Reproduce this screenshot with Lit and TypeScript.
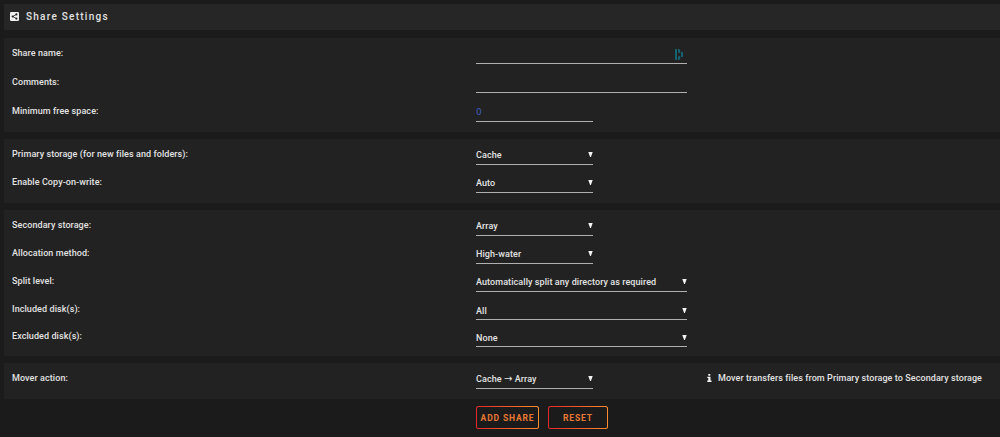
import { LitElement, html, css, svg } from "lit";
import { customElement } from "lit/decorators.js";
import { classMap } from "lit/directives/class-map.js";

interface Row {
  label: string;
  value?: string;
  kind: "text" | "number" | "select";
  wide?: boolean;
  vault?: boolean;
  tight?: boolean;
  note?: string;
}

const SECTIONS: { name: string; rows: Row[] }[] = [
  {
    name: "general",
    rows: [
      { label: "Share name:", kind: "text", wide: true, vault: true },
      { label: "Comments:", kind: "text", wide: true },
      { label: "Minimum free space:", kind: "number", value: "0" },
    ],
  },
  {
    name: "primary",
    rows: [
      { label: "Primary storage (for new files and folders):", kind: "select", value: "Cache" },
      { label: "Enable Copy-on-write:", kind: "select", value: "Auto" },
    ],
  },
  {
    name: "secondary",
    rows: [
      { label: "Secondary storage:", kind: "select", value: "Array" },
      { label: "Allocation method:", kind: "select", value: "High-water" },
      { label: "Split level:", kind: "select", value: "Automatically split any directory as required", wide: true },
      { label: "Included disk(s):", kind: "select", value: "All", wide: true, tight: true },
      { label: "Excluded disk(s):", kind: "select", value: "None", wide: true, tight: true },
    ],
  },
  {
    name: "mover",
    rows: [
      {
        label: "Mover action:",
        kind: "select",
        value: "Cache → Array",
        note: "Mover transfers files from Primary storage to Secondary storage",
      },
    ],
  },
];

@customElement("app-root")
export class AppRoot extends LitElement {
  static styles = css`
    :host {
      display: block;
      box-sizing: border-box;
      width: 1000px;
      height: 437px;
      overflow: hidden;
      padding: 4px 0 0 3.5px;
      background: #1b1b1b;
      color: #e2e2e2;
      font: 500 9px/12px Roboto, "Liberation Sans", sans-serif;
      letter-spacing: 0.08px;
    }
    .title {
      display: flex;
      align-items: center;
      box-sizing: border-box;
      height: 26px;
      padding: 0 0 1px 6.5px;
      background: #262626;
      font-size: 10px;
      letter-spacing: 1.25px;
      margin-bottom: 8px;
    }
    .title svg {
      width: 9px;
      height: 9px;
      margin-right: 7px;
    }
    .panel {
      box-sizing: border-box;
      background: #222222;
      padding: 6px 0 0 8.5px;
    }
    .general { height: 94px; margin-bottom: 7px; --step: 29px; }
    .primary { height: 64px; margin-bottom: 7px; --step: 28px; }
    .secondary { height: 146px; margin-bottom: 7px; --step: 28px; }
    .mover { height: 36px; margin-bottom: 7px; --step: 28px; }
    .row {
      display: grid;
      grid-template-columns: 464px 211px 1fr;
      height: var(--step);
      align-items: start;
    }
    .tight { height: 27px; }
    .label { padding-top: 3px; }
    .control {
      box-sizing: border-box;
      display: flex;
      justify-content: space-between;
      width: 117px;
      height: 20px;
      padding-top: 4px;
      border-bottom: 1px solid #b0b0b0;
    }
    .wide { width: 211px; }
    .tight .control { padding-top: 5px; }
    .number { color: #3f5eb8; font: 400 10px/12px "DejaVu Sans", sans-serif; font-size: 9px; }
    .arrow { width: 5px; height: 5px; margin: 3px 0.5px 0 0; }
    .vault { width: 9px; height: 11px; margin: 1px 3px 0 auto; }
    .glyph { font-family: "DejaVu Sans", sans-serif; font-size: 10px; line-height: 10px; }
    .note { display: flex; padding: 3px 0 0 20px; white-space: nowrap; }
    .note svg { width: 5px; height: 8px; margin: 2px 6px 0 0; }
    .actions {
      display: flex;
      gap: 9px;
      padding-left: 472.5px;
    }
    button {
      box-sizing: border-box;
      width: 63px;
      height: 23px;
      padding: 0;
      border: 1.5px solid transparent;
      border-radius: 2.5px;
      background:
        linear-gradient(#1b1b1b, #1b1b1b) padding-box,
        linear-gradient(90deg, #e22828, #ff8c2f) border-box;
      color: #e97835;
      font: 700 8.5px/12px Roboto, sans-serif;
      letter-spacing: 0.85px;
      white-space: nowrap;
    }
    .reset { width: 60px; }
  `;

  private control(row: Row) {
    const parts = (row.value ?? "").split("→");
    return html`<div class=${classMap({ control: true, wide: !!row.wide, number: row.kind === "number" })}>
      <span>${parts[0]}${parts.length > 1 ? html`<span class="glyph">→</span>${parts[1]}` : ""}</span>
      ${row.kind === "select"
        ? html`<svg class="arrow" viewBox="0 0 5 5">${svg`<path d="M.3 0h4.4L2.9 5h-.8z" fill="#f4f4f4"/>`}</svg>`
        : ""}
      ${row.vault
        ? html`<svg class="vault" viewBox="0 0 9 11">
            <path d="M0 0h2v11H0zM3 0h1l1.2 1v3H4L3 3zM3 8l1-1h1.2v3L4 11H3zM6 3h2v5H6z" fill="#136373" />
          </svg>`
        : ""}
    </div>`;
  }

  render() {
    return html`
      <div class="title">
        <svg viewBox="0 0 9 9">
          <rect width="9" height="9" rx="1.3" fill="#f2f2f2" />
          <path d="M6.4 2.4L2.8 4.5l3.6 2.1" fill="none" stroke="#262626" stroke-width=".8" />
          <circle cx="6.4" cy="2.4" r="1.1" fill="#262626" />
          <circle cx="2.7" cy="4.5" r="1.1" fill="#262626" />
          <circle cx="6.4" cy="6.6" r="1.1" fill="#262626" />
        </svg>
        <span>Share Settings</span>
      </div>
      ${SECTIONS.map(
        (s) => html`<section class="panel ${s.name}">
          ${s.rows.map(
            (r) => html`<div class=${classMap({ row: true, tight: !!r.tight })}>
              <span class="label">${r.label}</span>
              ${this.control(r)}
              ${r.note
                ? html`<div class="note">
                    <svg viewBox="0 0 5 8">
                      <path d="M1.3 0h2v1.8h-2zM.3 2.7h3.2v3.8h1V8H.3V6.5h1V4.1h-1z" fill="#f4f4f4" />
                    </svg>
                    <span>${r.note}</span>
                  </div>`
                : ""}
            </div>`
          )}
        </section>`
      )}
      <div class="actions">
        <button>ADD SHARE</button>
        <button class="reset">RESET</button>
      </div>
    `;
  }
}
